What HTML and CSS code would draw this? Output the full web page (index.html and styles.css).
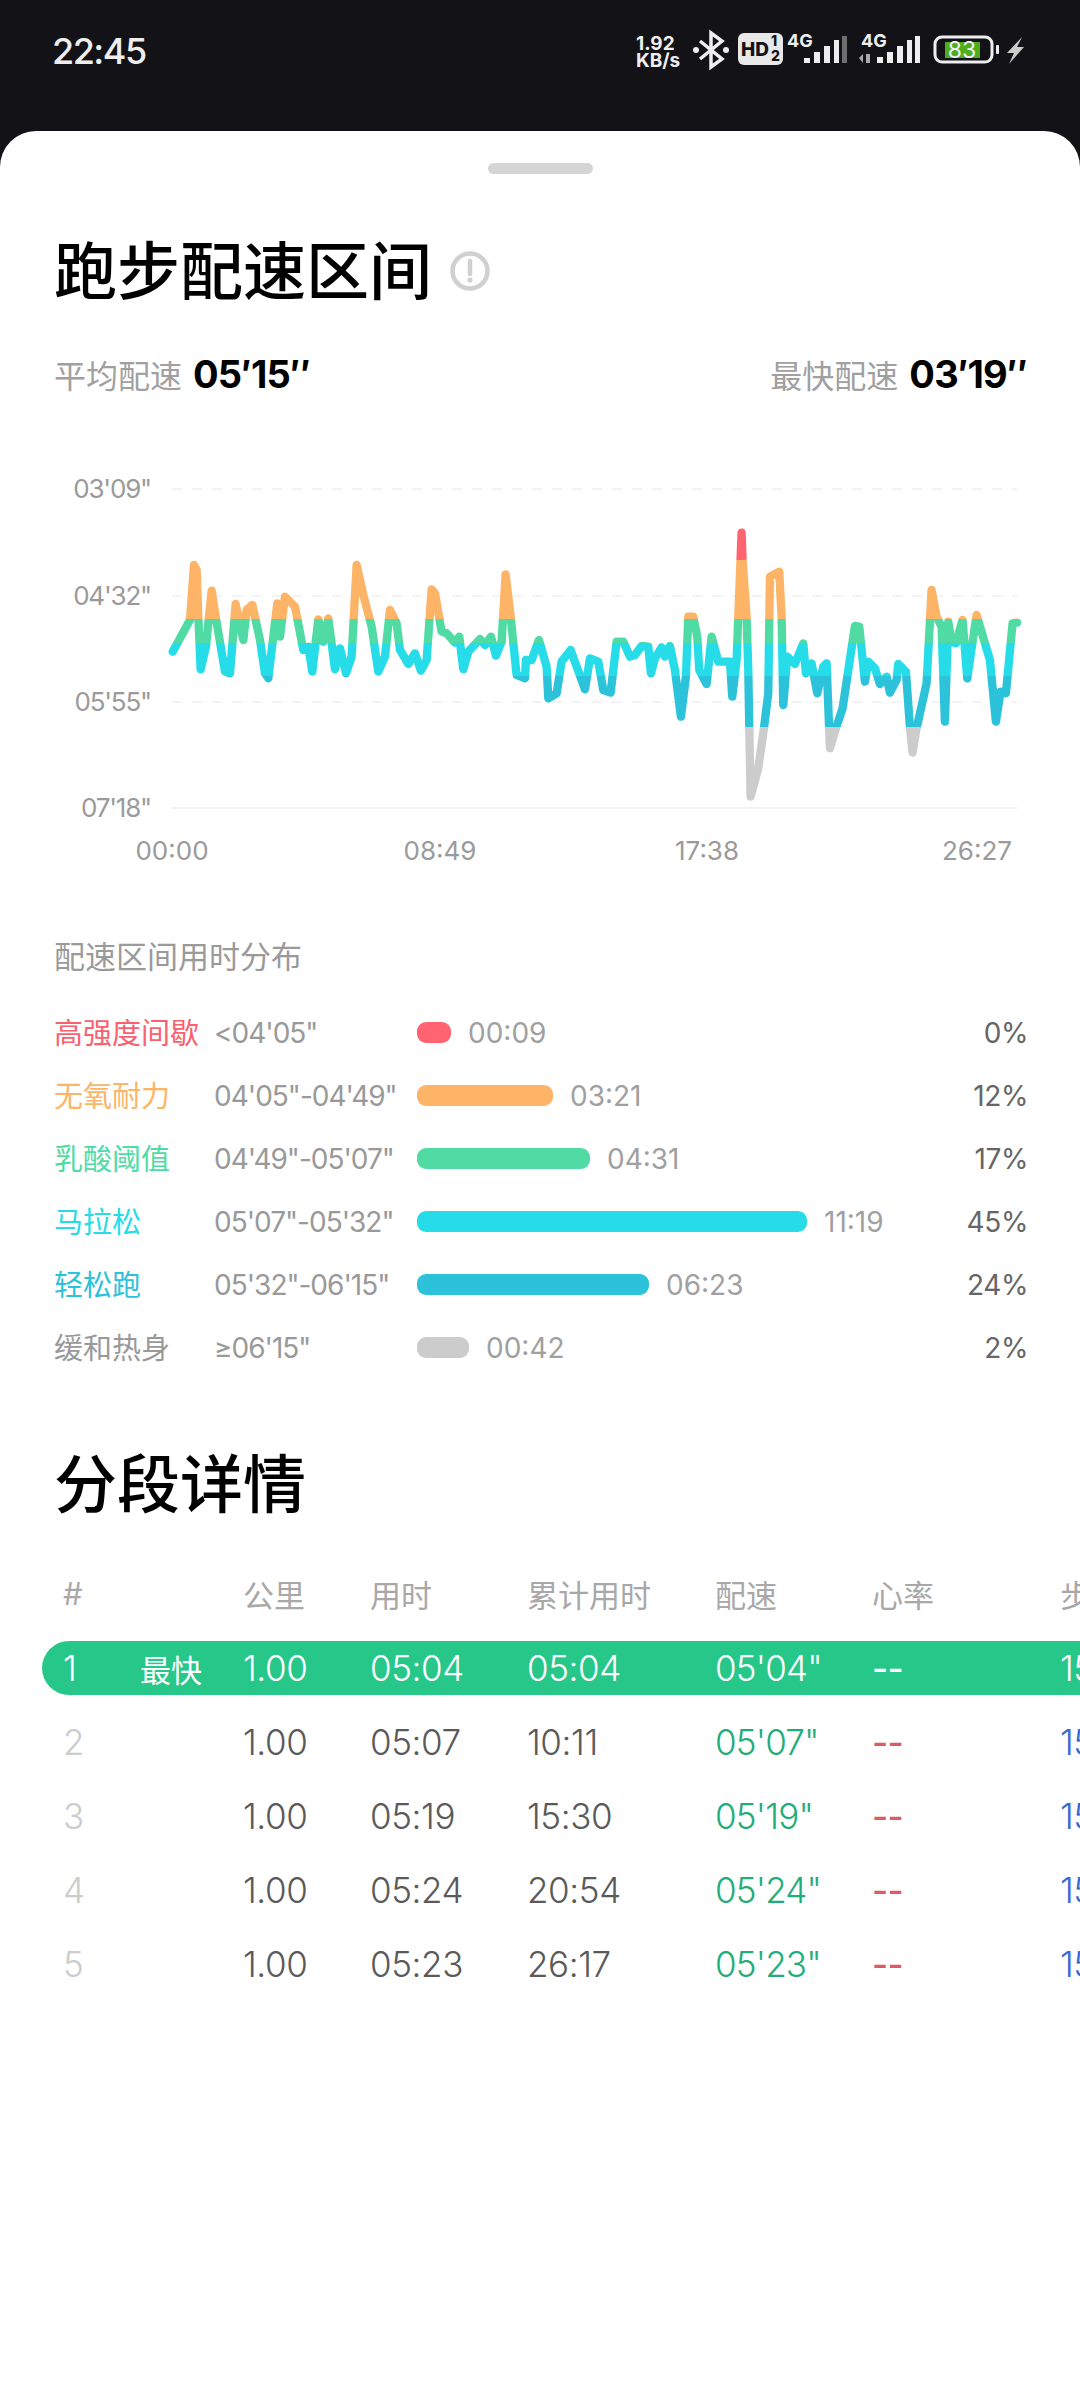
FILE: index.html
```html
<!DOCTYPE html>
<html lang="zh-CN">
<head>
  <meta charset="UTF-8">
  <meta name="viewport" content="width=device-width, initial-scale=1.0">
  <title>跑步配速区间</title>
  <link rel="stylesheet" href="styles.css">
</head>
<body>
  <div class="status-bar">
    <span class="clock">22:45</span>
    <!-- status icons, same coordinates as the screen -->
    <svg class="status-icons" width="400" height="50" viewBox="630 28 400 50">
      <text class="net" x="636" y="50">1.92</text>
      <text class="net" x="636" y="67">KB/s</text>
      <path d="M700 41l22 18-11 8V33l11 8-22 18" fill="none" stroke="#eee" stroke-width="3.5"/>
      <circle cx="696" cy="50" r="3" fill="#eee"/>
      <circle cx="726" cy="50" r="3" fill="#eee"/>
      <rect x="738" y="33" width="45" height="32" rx="6" fill="#e8e8e8"/>
      <text class="hd" x="741" y="56">HD</text>
      <text class="hd-small" x="771" y="46">1</text>
      <text class="hd-small" x="771" y="61">2</text>
      <text class="four-g" x="787" y="47">4G</text>
      <path d="M804 58h6v5h-6zM814 52h6v11h-6zM824 46h6v17h-6zM834 40h5v23h-5z" fill="#eee"/>
      <rect x="842" y="36" width="5" height="27" fill="#6e6e6e"/>
      <text class="four-g" x="861" y="47">4G</text>
      <path d="M859 58l4-4v9zM866 54h4v9h-4z" fill="#aaa"/>
      <path d="M877 57h6v6h-6zM887 52h6v11h-6zM897 46h6v17h-6zM907 40h5v23h-5zM915 36h5v27h-5z" fill="#eee"/>
      <rect x="935" y="37" width="57" height="25" rx="7" fill="none" stroke="#eee" stroke-width="3"/>
      <rect x="945" y="42" width="35" height="16" fill="#4caf1a"/>
      <text class="batt" x="962" y="58">83</text>
      <rect x="996" y="45" width="3" height="9" rx="1" fill="#eee"/>
      <path d="M1022 37l-15 16h7l-5 11 15-17h-7l5-10z" fill="#ccc"/>
    </svg>
  </div>

  <div class="sheet">
    <div class="handle"></div>

    <div class="page-title">
      <h1>跑步配速区间</h1>
      <svg class="info-icon" width="40" height="40" viewBox="0 0 40 40">
        <circle cx="20" cy="20" r="17.5" fill="none" stroke="#d0d0d0" stroke-width="4.5"/>
        <path d="M20 10v13" stroke="#d0d0d0" stroke-width="4.5" stroke-linecap="round"/>
        <circle cx="20" cy="29" r="2.6" fill="#d0d0d0"/>
      </svg>
    </div>

    <div class="summary">
      <div><span class="summary-label">平均配速</span><span class="summary-value">05′15″</span></div>
      <div><span class="summary-label">最快配速</span><span class="summary-value">03′19″</span></div>
    </div>

    <svg class="chart" width="1080" height="440" viewBox="0 0 1080 440">
      <defs>
        <!-- hard stops = pace zones -->
        <linearGradient id="zones" gradientUnits="userSpaceOnUse" x1="0" y1="0" x2="0" y2="1260">
          <stop offset="0.238" stop-color="#ff6470"/>
          <stop offset="0.238" stop-color="#fdb467"/>
          <stop offset="0.378" stop-color="#fdb467"/>
          <stop offset="0.378" stop-color="#50dba5"/>
          <stop offset="0.436" stop-color="#50dba5"/>
          <stop offset="0.436" stop-color="#25dce8"/>
          <stop offset="0.515" stop-color="#25dce8"/>
          <stop offset="0.515" stop-color="#2cc2da"/>
          <stop offset="0.635" stop-color="#2cc2da"/>
          <stop offset="0.635" stop-color="#cccccc"/>
        </linearGradient>
      </defs>

      <path class="grid" stroke-dasharray="10 10" d="M172 49H1017M172 156H1017M172 262H1017"/>
      <path class="grid" d="M172 368H1017"/>

      <text class="axis y-label" text-anchor="end" x="151" y="58">03'09"</text>
      <text class="axis y-label" text-anchor="end" x="151" y="165">04'32"</text>
      <text class="axis y-label" text-anchor="end" x="151" y="271">05'55"</text>
      <text class="axis y-label" text-anchor="end" x="151" y="377">07'18"</text>
      <text class="axis" text-anchor="middle" x="172" y="420">00:00</text>
      <text class="axis" text-anchor="middle" x="440" y="420">08:49</text>
      <text class="axis" text-anchor="middle" x="707" y="420">17:38</text>
      <text class="axis" text-anchor="middle" x="977" y="420">26:27</text>

      <g transform="translate(50 20) scale(0.3333)">
        <polyline class="pace-line" stroke="url(#zones)" points="368,575 420,480 432,315 440,330 445,470 452,628 468,560 485,392 497,470 525,635 540,640 557,432 565,470 580,540 590,450 607,435 630,540 645,640 655,655 682,430 690,530 705,410 735,440 760,570 775,560 787,635 805,478 820,545 835,475 855,628 870,565 888,640 905,590 920,315 940,405 965,500 985,635 1005,590 1020,450 1040,490 1050,570 1075,612 1095,580 1113,632 1130,600 1145,388 1155,400 1175,515 1190,520 1215,548 1228,530 1240,628 1255,575 1290,537 1305,555 1323,530 1338,587 1355,545 1367,343 1382,470 1400,645 1425,655 1428,600 1445,600 1467,540 1490,620 1495,715 1520,700 1535,605 1562,570 1605,688 1620,595 1645,605 1660,690 1682,698 1700,545 1720,545 1740,590 1755,585 1775,558 1795,560 1803,640 1815,595 1835,562 1845,590 1860,558 1875,630 1893,770 1908,650 1915,470 1930,470 1942,530 1948,630 1970,672 1985,530 2005,605 2040,605 2047,710 2060,600 2075,218 2078,300 2090,470 2095,630 2098,800 2102,1010 2125,925 2142,805 2155,700 2160,350 2188,335 2195,470 2200,735 2212,590 2235,612 2260,550 2268,640 2285,610 2302,700 2320,620 2330,610 2340,865 2358,805 2378,745 2415,498 2428,500 2445,665 2455,605 2475,625 2490,672 2510,650 2520,698 2540,660 2545,612 2568,635 2580,800 2588,878 2600,805 2630,670 2645,390 2660,470 2675,500 2685,785 2695,485 2705,545 2718,550 2738,480 2752,655 2780,465 2820,600 2838,785 2852,695 2868,700 2888,490 2902,488"/>
      </g>
    </svg>

    <div class="zone-title">配速区间用时分布</div>
    <div class="zones">
      <div class="zone-row">
        <span class="zone-name c-red">高强度间歇</span><span class="zone-range">&lt;04'05"</span>
        <div class="zone-bar-wrap"><div class="zone-bar b-red" style="width:34px"></div><span class="zone-time">00:09</span></div>
        <span class="zone-pct">0%</span>
      </div>
      <div class="zone-row">
        <span class="zone-name c-orange">无氧耐力</span><span class="zone-range">04'05"-04'49"</span>
        <div class="zone-bar-wrap"><div class="zone-bar b-orange" style="width:136px"></div><span class="zone-time">03:21</span></div>
        <span class="zone-pct">12%</span>
      </div>
      <div class="zone-row">
        <span class="zone-name c-green">乳酸阈值</span><span class="zone-range">04'49"-05'07"</span>
        <div class="zone-bar-wrap"><div class="zone-bar b-green" style="width:173px"></div><span class="zone-time">04:31</span></div>
        <span class="zone-pct">17%</span>
      </div>
      <div class="zone-row">
        <span class="zone-name c-cyan">马拉松</span><span class="zone-range">05'07"-05'32"</span>
        <div class="zone-bar-wrap"><div class="zone-bar b-cyan" style="width:390px"></div><span class="zone-time">11:19</span></div>
        <span class="zone-pct">45%</span>
      </div>
      <div class="zone-row">
        <span class="zone-name c-blue">轻松跑</span><span class="zone-range">05'32"-06'15"</span>
        <div class="zone-bar-wrap"><div class="zone-bar b-blue" style="width:232px"></div><span class="zone-time">06:23</span></div>
        <span class="zone-pct">24%</span>
      </div>
      <div class="zone-row">
        <span class="zone-name c-gray">缓和热身</span><span class="zone-range">≥06'15"</span>
        <div class="zone-bar-wrap"><div class="zone-bar b-gray" style="width:52px"></div><span class="zone-time">00:42</span></div>
        <span class="zone-pct">2%</span>
      </div>
    </div>

    <h2 class="section-title">分段详情</h2>

    <div class="splits">
      <div class="split-row split-head">
        <span>#</span><span></span><span>公里</span><span>用时</span><span>累计用时</span><span>配速</span><span>心率</span><span>步频</span>
      </div>
      <div class="split-row split-best">
        <span>1</span><span class="best-tag">最快</span><span>1.00</span><span>05:04</span><span>05:04</span><span class="tight">05'04"</span><span class="dash">--</span><span>15</span>
      </div>
      <div class="split-row">
        <span class="num">2</span><span></span><span>1.00</span><span>05:07</span><span>10:11</span><span class="pace tight">05'07"</span><span class="hr dash">--</span><span class="cadence">15</span>
      </div>
      <div class="split-row">
        <span class="num">3</span><span></span><span>1.00</span><span>05:19</span><span>15:30</span><span class="pace tight">05'19"</span><span class="hr dash">--</span><span class="cadence">15</span>
      </div>
      <div class="split-row">
        <span class="num">4</span><span></span><span>1.00</span><span>05:24</span><span>20:54</span><span class="pace tight">05'24"</span><span class="hr dash">--</span><span class="cadence">15</span>
      </div>
      <div class="split-row">
        <span class="num">5</span><span></span><span>1.00</span><span>05:23</span><span>26:17</span><span class="pace tight">05'23"</span><span class="hr dash">--</span><span class="cadence">15</span>
      </div>
    </div>
  </div>
</body>
</html>
```
FILE: styles.css
```css
* {
  box-sizing: border-box;
}

body {
  margin: 0;
  width: 1080px;
  height: 2400px;
  overflow: hidden;
  background: #121217;
  font-family: Inter, "Noto Sans CJK SC", sans-serif;
}

/* status bar */
.status-bar {
  height: 131px;
  position: relative;
  padding: 29px 0 0 52px;
}

.clock {
  font-size: 36px;
  line-height: 44px;
  font-weight: 500;
  letter-spacing: -1.5px;
  color: #eee;
}

.status-icons {
  position: absolute;
  top: 28px;
  left: 630px;
}

.net {
  font-size: 19px;
  font-weight: 700;
  fill: #eee;
}

.hd {
  font-size: 19px;
  font-weight: 800;
  fill: #121217;
}

.hd-small {
  font-size: 14px;
  font-weight: 800;
  fill: #121217;
}

.four-g {
  font-size: 18px;
  font-weight: 700;
  fill: #eee;
}

.batt {
  font-size: 23px;
  fill: #eef;
  text-anchor: middle;
}

/* sheet */
.sheet {
  height: 2269px;
  background: #fff;
  border-radius: 36px 36px 0 0;
  overflow: hidden;
  padding-top: 32px;
}

.handle {
  width: 105px;
  height: 11px;
  margin: 0 auto;
  border-radius: 6px;
  background: #d5d5d5;
}

.page-title {
  display: flex;
  align-items: center;
  gap: 18px;
  height: 80px;
  margin: 57px 0 0 54px;
}

.page-title h1 {
  margin: 0;
  font-size: 63px;
  line-height: 80px;
  font-weight: 500;
  color: #000;
}

.summary {
  display: flex;
  justify-content: space-between;
  align-items: center;
  height: 50px;
  margin-top: 38px;
  padding: 0 53px 0 54px;
}

.summary-label {
  font-size: 32px;
  color: #a0a0a0;
}

.summary-value {
  margin-left: 11px;
  font-size: 38px;
  font-weight: 700;
  letter-spacing: -0.8px;
  color: #000;
}

.chart {
  display: block;
  margin-top: 41px;
}

.grid {
  fill: none;
  stroke: #efefef;
  stroke-width: 1.5;
}

.axis {
  font-size: 26px;
  fill: #9a9a9a;
}

.y-label {
  letter-spacing: -1.2px;
}

.pace-line {
  fill: none;
  stroke-width: 25;
  stroke-linejoin: round;
  stroke-linecap: round;
}

/* zone distribution */
.zone-title {
  margin: 57px 0 0 54px;
  font-size: 31px;
  line-height: 40px;
  color: #9a9a9a;
}

.zones {
  margin-top: 24px;
  padding: 0 52px 0 54px;
}

.zone-row {
  display: grid;
  grid-template-columns: 160px 203px 1fr auto;
  align-items: center;
  height: 63px;
}

.zone-name {
  margin-bottom: 4px;
  font-size: 29px;
}

.zone-range {
  font-size: 28px;
  letter-spacing: -1px;
  color: #999;
}

.zone-bar-wrap {
  display: flex;
  align-items: center;
  gap: 17px;
}

.zone-bar {
  height: 21px;
  border-radius: 9px;
}

.zone-time {
  font-size: 28px;
  color: #a0a0a0;
}

.zone-pct {
  font-size: 28px;
  letter-spacing: -0.4px;
  color: #666;
}

.c-red { color: #f9616e; }
.c-orange { color: #fdb467; }
.c-green { color: #50dba5; }
.c-cyan { color: #25dce8; }
.c-blue { color: #2cc2da; }
.c-gray { color: #999; }

.b-red { background: #ff6470; }
.b-orange { background: #fdb467; }
.b-green { background: #50dba5; }
.b-cyan { background: #25dce8; }
.b-blue { background: #2cc2da; }
.b-gray { background: #cccccc; }

/* splits table */
.section-title {
  margin: 65px 0 0 54px;
  font-size: 63px;
  line-height: 80px;
  font-weight: 500;
  color: #000;
}

.splits {
  margin: 31px 0 0 42px;
}

.split-row {
  display: grid;
  grid-template-columns: 77px 103px 127px 157px 188px 157px 188px 60px;
  align-items: center;
  height: 74px;
  padding-left: 21px;
  font-size: 35px;
  letter-spacing: -0.4px;
  font-weight: 300;
  color: #5a5a5a;
  white-space: nowrap;
}

.split-head {
  height: 76px;
  font-size: 31px;
  letter-spacing: 0;
  font-weight: 400;
  color: #a8a8a8;
}

.split-best {
  height: 54px;
  margin: 10px 0;
  border-radius: 27px 0 0 27px;
  background: #27c78a;
  color: #fff;
}

.best-tag {
  font-size: 31px;
  letter-spacing: 0;
  font-weight: 400;
}

.tight {
  letter-spacing: -0.8px;
}

.dash {
  font-weight: 500;
  letter-spacing: -0.6px;
}

.num {
  color: #ccc;
}

.pace {
  color: #1fae7a;
}

.hr {
  color: #dc5b68;
}

.cadence {
  color: #3b68d0;
}
```
